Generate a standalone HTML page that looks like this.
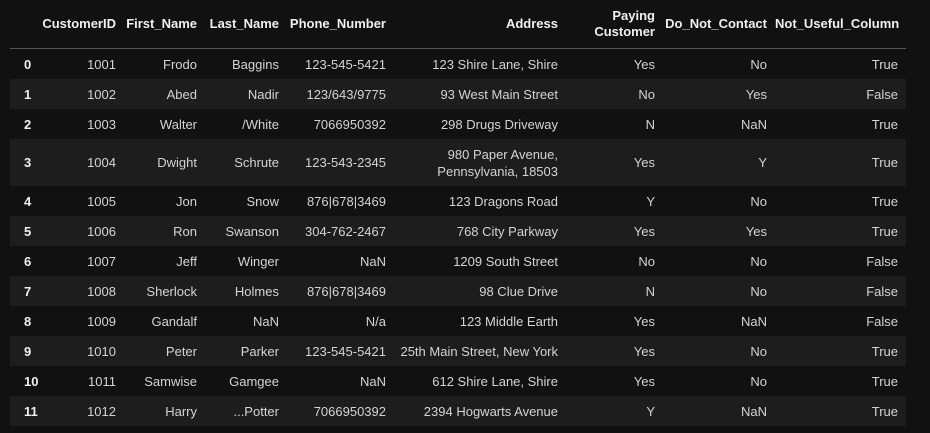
<!DOCTYPE html>
<html><head><style>
body{margin:0;background:#111111;width:930px;height:433px;overflow:hidden;font-family:"Liberation Sans",sans-serif;font-size:13px;color:#d4d4d4}
table{position:absolute;left:10px;top:0;border-collapse:collapse;table-layout:fixed;width:896px}
th,td{text-align:right;padding:0 8px 0 0;white-space:nowrap;overflow:visible}
th{color:#f0f0f0;font-weight:bold;height:48px;border-bottom:1px solid #555;line-height:16px;vertical-align:middle}
td{height:30px;line-height:17px}
tbody tr:nth-child(even){background:#1d1d1d}
td.i,th.i{text-align:left;padding-left:14px;font-weight:bold;color:#f0f0f0}
tr.tall td{height:47px}
</style></head><body>
<table>
<colgroup><col style="width:28px"><col style="width:86px"><col style="width:81px"><col style="width:82px"><col style="width:107px"><col style="width:172px"><col style="width:97px"><col style="width:112px"><col style="width:131px"></colgroup>
<thead><tr><th class="i"></th><th>CustomerID</th><th>First_Name</th><th>Last_Name</th><th>Phone_Number</th><th>Address</th><th>Paying<br>Customer</th><th>Do_Not_Contact</th><th>Not_Useful_Column</th></tr></thead>
<tbody>
<tr><td class="i">0</td><td>1001</td><td>Frodo</td><td>Baggins</td><td>123-545-5421</td><td>123 Shire Lane, Shire</td><td>Yes</td><td>No</td><td>True</td></tr>
<tr><td class="i">1</td><td>1002</td><td>Abed</td><td>Nadir</td><td>123/643/9775</td><td>93 West Main Street</td><td>No</td><td>Yes</td><td>False</td></tr>
<tr><td class="i">2</td><td>1003</td><td>Walter</td><td>/White</td><td>7066950392</td><td>298 Drugs Driveway</td><td>N</td><td>NaN</td><td>True</td></tr>
<tr class="tall"><td class="i">3</td><td>1004</td><td>Dwight</td><td>Schrute</td><td>123-543-2345</td><td>980 Paper Avenue,<br>Pennsylvania, 18503</td><td>Yes</td><td>Y</td><td>True</td></tr>
<tr><td class="i">4</td><td>1005</td><td>Jon</td><td>Snow</td><td>876|678|3469</td><td>123 Dragons Road</td><td>Y</td><td>No</td><td>True</td></tr>
<tr><td class="i">5</td><td>1006</td><td>Ron</td><td>Swanson</td><td>304-762-2467</td><td>768 City Parkway</td><td>Yes</td><td>Yes</td><td>True</td></tr>
<tr><td class="i">6</td><td>1007</td><td>Jeff</td><td>Winger</td><td>NaN</td><td>1209 South Street</td><td>No</td><td>No</td><td>False</td></tr>
<tr><td class="i">7</td><td>1008</td><td>Sherlock</td><td>Holmes</td><td>876|678|3469</td><td>98 Clue Drive</td><td>N</td><td>No</td><td>False</td></tr>
<tr><td class="i">8</td><td>1009</td><td>Gandalf</td><td>NaN</td><td>N/a</td><td>123 Middle Earth</td><td>Yes</td><td>NaN</td><td>False</td></tr>
<tr><td class="i">9</td><td>1010</td><td>Peter</td><td>Parker</td><td>123-545-5421</td><td>25th Main Street, New York</td><td>Yes</td><td>No</td><td>True</td></tr>
<tr><td class="i">10</td><td>1011</td><td>Samwise</td><td>Gamgee</td><td>NaN</td><td>612 Shire Lane, Shire</td><td>Yes</td><td>No</td><td>True</td></tr>
<tr><td class="i">11</td><td>1012</td><td>Harry</td><td>...Potter</td><td>7066950392</td><td>2394 Hogwarts Avenue</td><td>Y</td><td>NaN</td><td>True</td></tr>
</tbody></table>
</body></html>
